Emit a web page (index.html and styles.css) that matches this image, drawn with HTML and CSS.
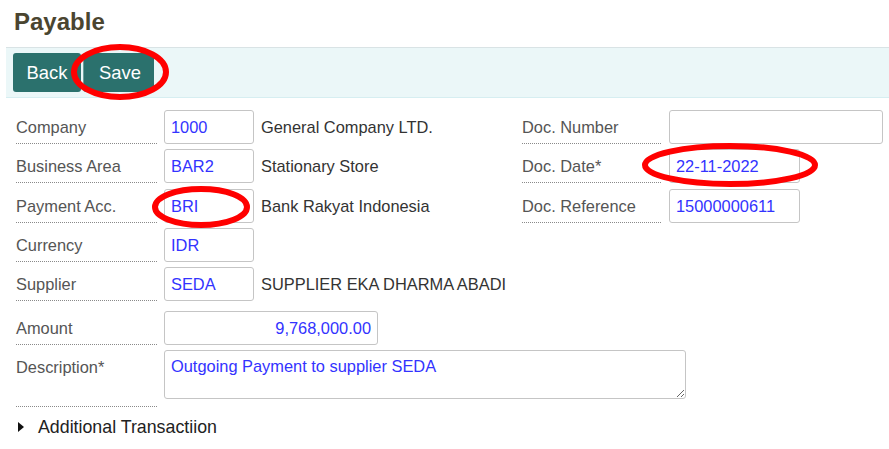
FILE: index.html
```html
<!DOCTYPE html>
<html>
<head>
<meta charset="utf-8">
<link rel="stylesheet" href="styles.css">
</head>
<body>
<div class="page">
  <h1 class="title">Payable</h1>
  <div class="toolbar">
    <button class="btn">Back</button><button class="btn btn-save">Save</button>
  </div>
  <div class="form">
    <div class="row">
      <div class="label">Company</div>
      <input class="field w90" value="1000">
      <span class="desc">General Company LTD.</span>
    </div>
    <div class="row right">
      <div class="label rl">Doc. Number</div>
      <input class="field w214" value="">
    </div>
    <div class="row">
      <div class="label">Business Area</div>
      <input class="field w90" value="BAR2">
      <span class="desc">Stationary Store</span>
    </div>
    <div class="row right">
      <div class="label rl">Doc. Date*</div>
      <input class="field w131" value="22-11-2022">
    </div>
    <div class="row tall">
      <div class="label">Payment Acc.</div>
      <input class="field w90" value="BRI">
      <span class="desc">Bank Rakyat Indonesia</span>
    </div>
    <div class="row right tall">
      <div class="label rl">Doc. Reference</div>
      <input class="field w131" value="15000000611">
    </div>
    <div class="row full">
      <div class="label">Currency</div>
      <input class="field w90" value="IDR">
    </div>
    <div class="row full">
      <div class="label">Supplier</div>
      <input class="field w90" value="SEDA">
      <span class="desc">SUPPLIER EKA DHARMA ABADI</span>
    </div>
    <div class="row full amount-row">
      <div class="label">Amount</div>
      <input class="field w214 num" value="9,768,000.00">
    </div>
    <div class="row full">
      <div class="label">Description*</div>
      <textarea class="area">Outgoing Payment to supplier SEDA</textarea>
    </div>
  </div>
  <div class="more"><span class="tri"></span>Additional Transactiion</div>

  <svg class="marks" width="889" height="449" viewBox="0 0 889 449">
    <ellipse cx="120" cy="72" rx="46" ry="25" fill="none" stroke="#ff0000" stroke-width="6"/>
    <ellipse cx="730" cy="165" rx="85" ry="19" fill="none" stroke="#ff0000" stroke-width="6"/>
    <ellipse cx="201" cy="207" rx="46" ry="18" fill="none" stroke="#ff0000" stroke-width="6"/>
  </svg>
</div>
</body>
</html>
```

FILE: styles.css
```css
* { box-sizing: border-box; }
html, body { margin: 0; padding: 0; background: #fff; }
body { font-family: "Liberation Sans", Arial, sans-serif; width: 889px; height: 449px; overflow: hidden; }
.page { position: relative; width: 889px; height: 449px; }

.title {
  margin: 0;
  padding: 8px 0 0 14px;
  font-size: 24px;
  line-height: 28px;
  font-weight: bold;
  color: #4a4530;
  height: 47px;
}

.toolbar {
  margin-left: 6px;
  height: 51px;
  background: #ebf7f8;
  border-top: 1px solid #d9e3e5;
  border-bottom: 1px solid #d6eef1;
  padding: 5px 0 0 7px;
  display: flex;
}
.btn {
  height: 39px;
  background: #2b716d;
  color: #fff;
  border: none;
  border-radius: 3px;
  font-family: "Liberation Sans", Arial, sans-serif;
  font-size: 18.4px;
  padding: 0 12px;
  width: 68px;
  margin: 0;
}
.btn-save {
  width: 71px;
  margin-left: 2px;
  border-left: 1px solid #6a9f9c;
  padding: 0 12px 0 14px;
}

.form {
  margin-top: 7px;
  display: grid;
  grid-template-columns: 522px 1fr;
}
.row {
  display: flex;
  align-items: flex-start;
  padding-top: 5px;
  padding-left: 16px;
}
.row.tall { padding-top: 6px; }
.row.right { padding-left: 0; }
.row.full { grid-column: 1 / -1; }
.row.amount-row { padding-top: 10px; }

.label {
  align-self: stretch;
  width: 141px;
  margin-right: 7px;
  padding-top: 8px;
  font-size: 16.4px;
  line-height: 18px;
  color: #555;
  border-bottom: 1px dotted #8a8a8a;
  white-space: nowrap;
}
.label.rl { width: 139px; margin-right: 8px; }

.field {
  height: 34px;
  border: 1px solid #c5c5c5;
  border-radius: 3px;
  padding: 0 6px;
  font-family: "Liberation Sans", Arial, sans-serif;
  font-size: 16.4px;
  color: #3333ff;
  background: #fff;
  outline: none;
  margin: 0;
}
.w90 { width: 90px; }
.w131 { width: 131px; }
.w214 { width: 214px; }
.num { text-align: right; }

.desc {
  margin-left: 7px;
  font-size: 16.4px;
  line-height: 34px;
  color: #333;
  white-space: nowrap;
}

.area {
  width: 522px;
  height: 49px;
  margin: 0 0 8px 0;
  border: 1px solid #c5c5c5;
  border-radius: 3px;
  padding: 6px 6px;
  font-family: "Liberation Sans", Arial, sans-serif;
  font-size: 16.4px;
  line-height: 18px;
  color: #3333ff;
  resize: both;
  outline: none;
}

.more {
  margin-top: 10px;
  padding-left: 18px;
  font-size: 17.8px;
  line-height: 20px;
  color: #222;
  display: flex;
  align-items: center;
}
.tri {
  width: 0;
  height: 0;
  border-left: 6px solid #111;
  border-top: 5px solid transparent;
  border-bottom: 5px solid transparent;
  margin-right: 14px;
}

.marks {
  position: absolute;
  left: 0;
  top: 0;
  pointer-events: none;
}
```
